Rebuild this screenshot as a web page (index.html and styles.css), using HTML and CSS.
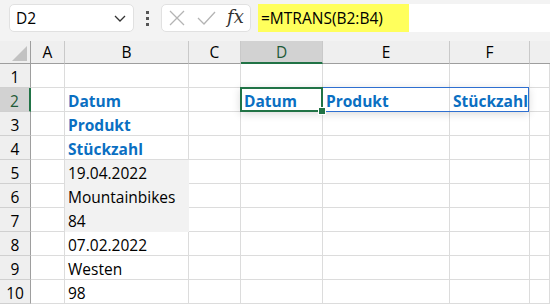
FILE: index.html
```html
<!DOCTYPE html>
<html lang="de">
<head>
  <meta charset="UTF-8" />
  <title>MTRANS</title>
  <link rel="stylesheet" href="styles.css">
</head>
<body>
  <div class="toolbar">
    <div class="namebox">
      <span>D2</span>
      <svg class="chevron" width="12" height="7" viewBox="0 0 12 7"><path d="M1 1 L6 6 L11 1" fill="none" stroke="#333" stroke-width="1.3"/></svg>
    </div>
    <div class="dots"><i></i><i></i><i></i></div>
    <div class="fxbox">
      <svg width="16" height="16" viewBox="0 0 16 16"><path d="M1 1 L15 15 M15 1 L1 15" stroke="#b4b4b4" stroke-width="1.3"/></svg>
      <svg width="19" height="15" viewBox="0 0 19 15"><path d="M1 7 L7 13 L18 1" fill="none" stroke="#b4b4b4" stroke-width="1.3"/></svg>
      <span class="fx">fx</span>
    </div>
    <div class="formula">
      <span class="hl">=MTRANS(B2:B4)</span>
    </div>
  </div>

  <div class="sheet">
    <div class="hd corner"><span class="tri"></span></div>
    <div class="hd">A</div>
    <div class="hd">B</div>
    <div class="hd">C</div>
    <div class="hd sel">D</div>
    <div class="hd">E</div>
    <div class="hd">F</div>
    <div class="hd last"></div>

    <div class="rh">1</div><div class="c"></div><div class="c"></div><div class="c"></div><div class="c"></div><div class="c"></div><div class="c"></div><div class="c"></div>
    <div class="rh sel">2</div><div class="c"></div><div class="c hdr">Datum</div><div class="c"></div>
    <div class="c hdr act">Datum<span class="spill"></span><span class="active"><span class="handle"></span></span></div>
    <div class="c hdr">Produkt</div><div class="c hdr">Stückzahl</div><div class="c"></div>
    <div class="rh">3</div><div class="c"></div><div class="c hdr">Produkt</div><div class="c"></div><div class="c"></div><div class="c"></div><div class="c"></div><div class="c"></div>
    <div class="rh">4</div><div class="c"></div><div class="c hdr">Stückzahl</div><div class="c"></div><div class="c"></div><div class="c"></div><div class="c"></div><div class="c"></div>
    <div class="rh">5</div><div class="c"></div><div class="c fill">19.04.2022</div><div class="c"></div><div class="c"></div><div class="c"></div><div class="c"></div><div class="c"></div>
    <div class="rh">6</div><div class="c"></div><div class="c fill">Mountainbikes</div><div class="c"></div><div class="c"></div><div class="c"></div><div class="c"></div><div class="c"></div>
    <div class="rh">7</div><div class="c"></div><div class="c fill">84</div><div class="c"></div><div class="c"></div><div class="c"></div><div class="c"></div><div class="c"></div>
    <div class="rh">8</div><div class="c"></div><div class="c">07.02.2022</div><div class="c"></div><div class="c"></div><div class="c"></div><div class="c"></div><div class="c"></div>
    <div class="rh">9</div><div class="c"></div><div class="c">Westen</div><div class="c"></div><div class="c"></div><div class="c"></div><div class="c"></div><div class="c"></div>
    <div class="rh">10</div><div class="c"></div><div class="c">98</div><div class="c"></div><div class="c"></div><div class="c"></div><div class="c"></div><div class="c"></div>
  </div>
</body>
</html>
```

FILE: styles.css
```css
body {
  margin: 0;
  font-family: "Open Sans", sans-serif;
  background-color: #fff;
  color: #000;
  overflow: hidden;
}

.toolbar {
  height: 41px;
  background-color: #f3f3f3;
  display: flex;
  align-items: flex-start;
  padding: 4px 0 0 9px;
  box-sizing: border-box;
}

.namebox {
  width: 125px;
  height: 28px;
  box-sizing: border-box;
  background-color: #fff;
  border: 1px solid #e1e1e1;
  border-radius: 5px;
  display: flex;
  align-items: center;
  justify-content: space-between;
  padding: 0 7px 0 6px;
  font-size: 15.5px;
}

.dots {
  width: 27px;
  height: 28px;
  display: flex;
  flex-direction: column;
  align-items: center;
  justify-content: center;
  gap: 3px;
}

.dots i {
  width: 3px;
  height: 3px;
  background-color: #555;
}

.fxbox {
  width: 90px;
  height: 28px;
  box-sizing: border-box;
  background-color: #fff;
  border: 1px solid #e1e1e1;
  border-radius: 5px;
  display: flex;
  align-items: center;
  padding: 0 0 0 7px;
  gap: 12px;
}

.fx {
  font-family: "DejaVu Serif", serif;
  font-style: italic;
  font-size: 18px;
  color: #333;
  margin-left: -1px;
  margin-top: -3px;
}

.formula {
  flex: 1;
  height: 28px;
  margin-left: 7px;
  background-color: #fff;
  display: flex;
}

.hl {
  width: 151px;
  background-color: #ffff5c;
  font-size: 15.5px;
  line-height: 28px;
  padding-left: 3px;
  box-sizing: border-box;
}

.sheet {
  display: grid;
  grid-template-columns: 31px 34px 124px 52px 82px 127px 80px 20px;
  grid-template-rows: 23px repeat(10, 24px);
}

.hd {
  background-color: #efefef;
  border-right: 1px solid #c9c9c9;
  border-bottom: 1px solid #9e9e9e;
  font-size: 15.5px;
  text-align: center;
  line-height: 22px;
}

.hd.sel {
  background-color: #d2d2d2;
  border-bottom: 2px solid #217346;
  color: #1e5a37;
}

.hd.last {
  border-right: none;
}

.corner {
  display: flex;
  align-items: flex-end;
  justify-content: flex-end;
  border-right-color: #9e9e9e;
}

.tri {
  width: 0;
  height: 0;
  border-left: 15px solid transparent;
  border-bottom: 15px solid #c2c2c2;
  margin: 0 3px 2px 0;
}

.rh {
  background-color: #efefef;
  border-right: 1px solid #9e9e9e;
  border-bottom: 1px solid #d0d0d0;
  font-size: 15.5px;
  text-align: center;
  line-height: 26px;
}

.rh.sel {
  background-color: #d2d2d2;
  border-right: 2px solid #217346;
  color: #1e5a37;
}

.c {
  border-right: 1px solid #dcdcdc;
  border-bottom: 1px solid #dcdcdc;
  font-size: 15.5px;
  line-height: 27px;
  padding-left: 3px;
  white-space: nowrap;
}

.c.fill {
  background-color: #f2f2f2;
  border-right-color: #f2f2f2;
  border-bottom-color: #f2f2f2;
}

.c.hdr {
  color: #0a6fc2;
  font-weight: bold;
}

.act {
  position: relative;
}

.spill {
  position: absolute;
  left: -1px;
  top: -1px;
  width: 289px;
  height: 25px;
  box-sizing: border-box;
  border: 1px solid #2e6fd0;
  box-shadow: 0 2px 8px rgba(0, 0, 0, 0.15);
}

.active {
  position: absolute;
  left: -1px;
  top: -1px;
  width: 83px;
  height: 25px;
  box-sizing: border-box;
  border: 2px solid #217346;
}

.handle {
  position: absolute;
  right: -5px;
  bottom: -5px;
  width: 6px;
  height: 6px;
  background-color: #217346;
  border: 1px solid #fff;
}
```
